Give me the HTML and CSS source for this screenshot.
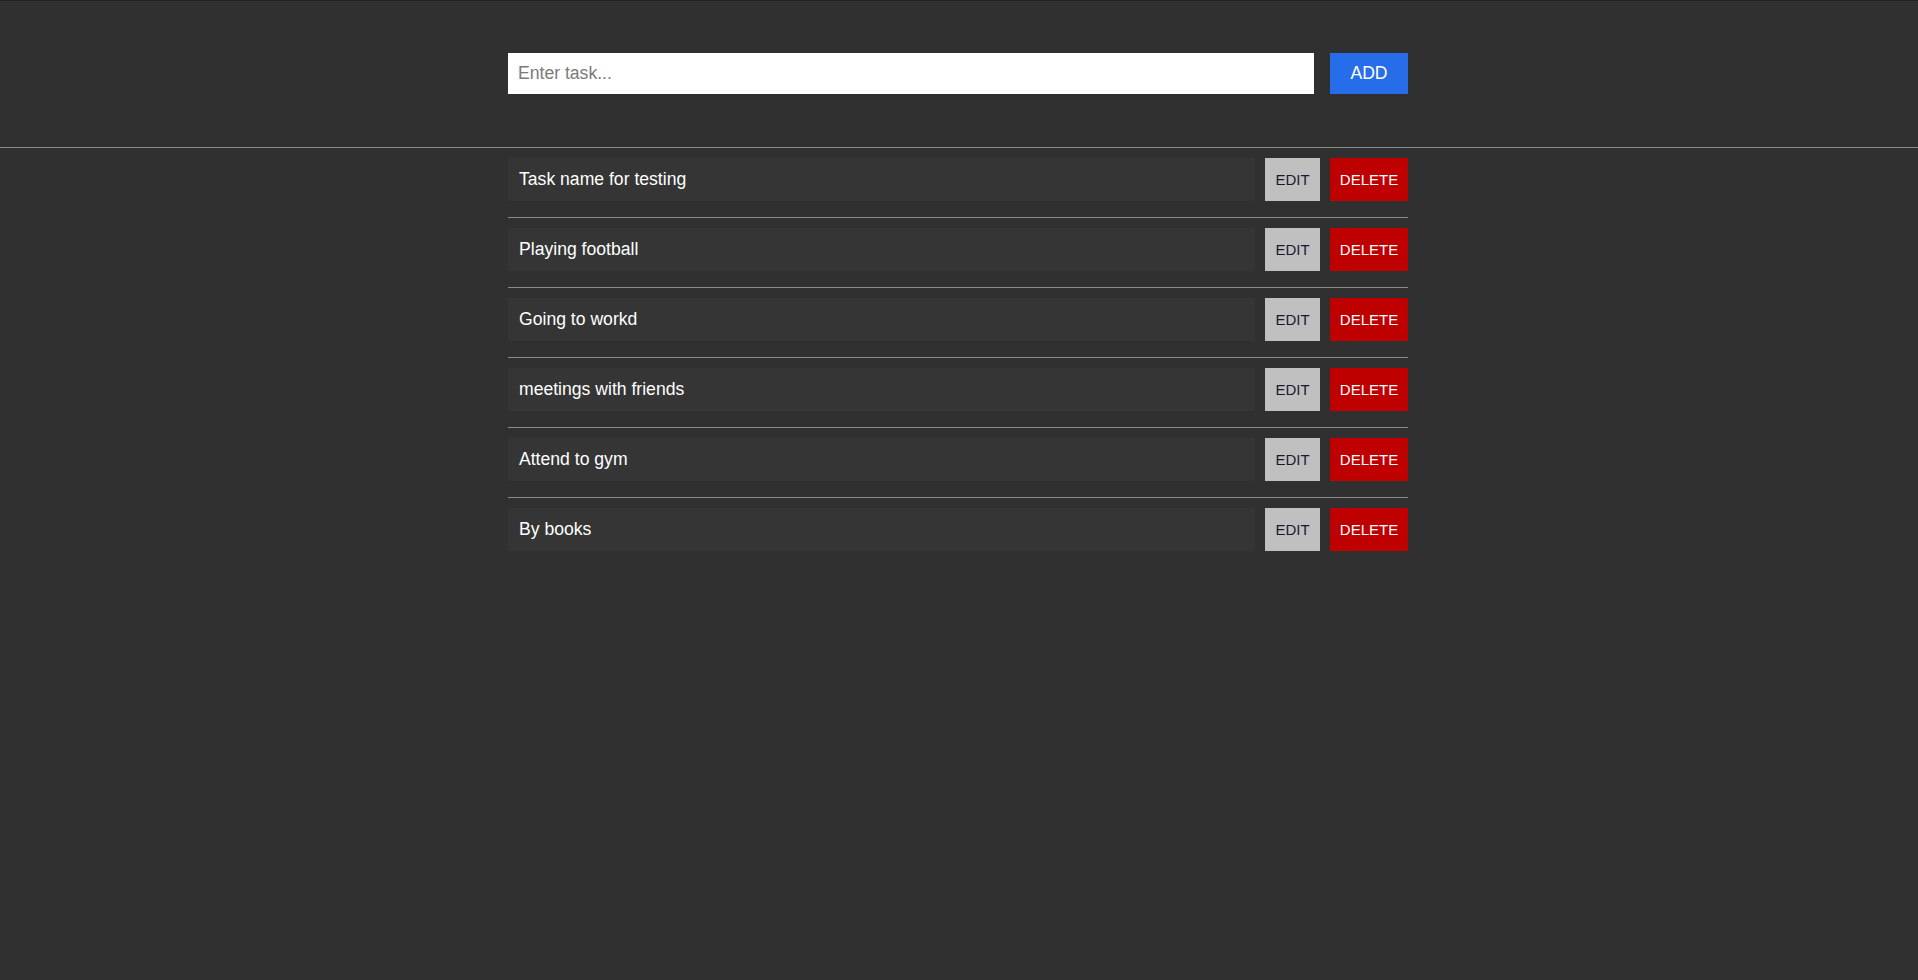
FILE: index.html
```html
<!DOCTYPE html>
<html lang="en">
<head>
<meta charset="utf-8">
<title>Tasks</title>
<link rel="stylesheet" href="styles.css">
</head>
<body>
<header class="top">
  <form class="add-form">
    <input class="task-input" type="text" placeholder="Enter task...">
    <button class="add-btn" type="button">ADD</button>
  </form>
</header>
<ul class="tasks">
  <li class="task"><span class="task-name">Task name for testing</span><button class="btn edit">EDIT</button><button class="btn delete">DELETE</button></li>
  <li class="task"><span class="task-name">Playing football</span><button class="btn edit">EDIT</button><button class="btn delete">DELETE</button></li>
  <li class="task"><span class="task-name">Going to workd</span><button class="btn edit">EDIT</button><button class="btn delete">DELETE</button></li>
  <li class="task"><span class="task-name">meetings with friends</span><button class="btn edit">EDIT</button><button class="btn delete">DELETE</button></li>
  <li class="task"><span class="task-name">Attend to gym</span><button class="btn edit">EDIT</button><button class="btn delete">DELETE</button></li>
  <li class="task"><span class="task-name">By books</span><button class="btn edit">EDIT</button><button class="btn delete">DELETE</button></li>
</ul>
</body>
</html>
```
FILE: styles.css
```css
* { box-sizing: border-box; }
html { background: #303030; }
html, body { margin: 0; padding: 0; }
body {
  background: #303030;
  border-top: 1px solid #242424;
  font-family: "Liberation Sans", Arial, sans-serif;
}
.top {
  padding: 52px 0 53px;
  border-bottom: 1px solid #8a8a8a;
}
.add-form {
  width: 900px;
  margin: 0 0 0 calc(50% - 451px);
  display: flex;
  gap: 16px;
}
.task-input {
  flex: 1;
  height: 41px;
  border: none;
  outline: none;
  padding: 0 10px;
  font-family: inherit;
  font-size: 17.6px;
  color: #222;
  background: #fff;
}
.task-input::placeholder { color: #7b7b7b; }
.add-btn {
  width: 78px;
  height: 41px;
  border: none;
  background: #276ce8;
  color: #fff;
  font-family: inherit;
  font-size: 17.6px;
  padding: 0;
}
.tasks {
  list-style: none;
  width: 900px;
  margin: 0 0 0 calc(50% - 451px);
  padding: 0;
}
.task {
  display: flex;
  gap: 10px;
  padding: 10px 0 16px;
  border-bottom: 1px solid #8a8a8a;
}
.task:last-child { border-bottom: none; }
.task-name {
  flex: 1;
  height: 43px;
  display: flex;
  align-items: center;
  padding-left: 11px;
  background: #353535;
  color: #fff;
  font-size: 17.6px;
}
.btn {
  height: 43px;
  border: none;
  padding: 0;
  font-family: inherit;
  font-size: 15px;
}
.edit { width: 55px; background: #c0c0c0; color: #1a1a2e; }
.delete { width: 78px; background: #be0000; color: #fff; }
```
